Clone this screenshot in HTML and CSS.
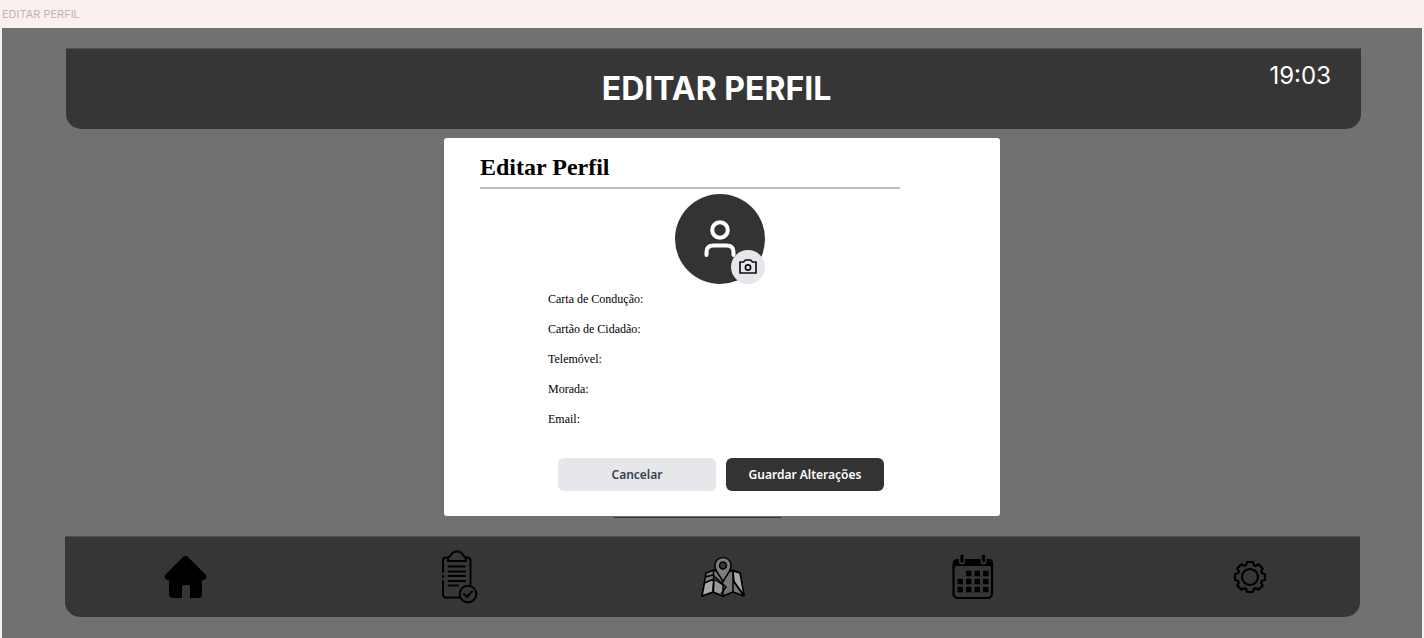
FILE: index.html
```html
<!DOCTYPE html>
<html lang="pt">
<head>
<meta charset="utf-8">
<meta name="viewport" content="width=device-width, initial-scale=1">
<title>Editar Perfil</title>
<link rel="stylesheet" href="styles.css">
</head>
<body>
<p class="frame-label">EDITAR PERFIL</p>
<div class="frame">
  <header class="topbar">
    <span></span>
    <h1 class="topbar-title">EDITAR PERFIL</h1>
    <time class="clock">19:03</time>
  </header>

  <main class="content">
    <form class="dialog" role="dialog" aria-labelledby="dialog-title">
      <h2 class="dialog-title" id="dialog-title">Editar Perfil</h2>
      <div class="avatar">
        <svg class="avatar-icon" viewBox="0 0 34 40" fill="none" stroke="#fff" stroke-width="4" stroke-linecap="round" aria-hidden="true">
          <circle cx="17" cy="11" r="7.8"/>
          <path d="M3.500 36V33Q3.500 26.500 10.500 26.500H23.500Q30.500 26.500 30.500 33V36"/>
        </svg>
        <button class="camera" type="button" aria-label="Alterar fotografia">
          <svg class="camera-icon" viewBox="0 0 20 18" fill="none" stroke="#111" stroke-width="1.700" stroke-linejoin="round" aria-hidden="true">
            <path d="M2 4H5.500L7.500 2H12.500L14.500 4H18V15H2Z"/>
            <circle cx="10" cy="9.500" r="2.600"/>
          </svg>
        </button>
      </div>
      <div class="fields">
        <label for="carta">Carta de Condução:</label><input id="carta" type="text">
        <label for="cartao">Cartão de Cidadão:</label><input id="cartao" type="text">
        <label for="telemovel">Telemóvel:</label><input id="telemovel" type="tel">
        <label for="morada">Morada:</label><input id="morada" type="text">
        <label for="email">Email:</label><input id="email" type="email">
      </div>
      <div class="actions">
        <button class="btn btn-cancel" type="button">Cancelar</button>
        <button class="btn btn-save" type="submit">Guardar Alterações</button>
      </div>
    </form>
    <div class="underlay-edge"></div>
  </main>

  <nav class="bottombar" aria-label="Principal">
    <a href="#inicio" aria-label="Início">
      <svg width="43" height="44" viewBox="0 0 43 44" aria-hidden="true">
        <path d="M18.800 2.200Q21.500 0 24.200 2.200L41.500 19.500Q43.500 22 41.500 24Q40.500 25.200 38 25V39Q38 43 34 43H26V32Q26 30 24 30H20Q18 30 18 32V43H9Q5 43 5 39V25Q2.500 25.200 1.500 24Q-.5 22 1.500 19.500Z"/>
      </svg>
    </a>
    <a href="#tarefas" aria-label="Tarefas">
      <svg width="38" height="54" viewBox="0 0 38 54" fill="none" stroke="#000" stroke-width="2" stroke-linecap="round" stroke-linejoin="round" aria-hidden="true">
        <path d="M7 7.500H5Q2 7.500 2 10.500V22M2 31V44Q2 47.500 5 47.500H19M2 26V27M24 7.500H26Q29.500 7.500 29.500 10.500V34"/>
        <path d="M7 11V8Q7 6.500 9 6.500Q11 1.500 16 1.500T23 6.500Q25 6.500 25 8V11Z"/>
        <path d="M7.500 16.500H24M7.500 21.500H24M7.500 26H24M7.500 31H24M7.500 35.500H17"/>
        <circle cx="27" cy="44" r="8.300"/>
        <path d="M23 44L26 47L31 41.500"/>
      </svg>
    </a>
    <a href="#mapa" aria-label="Mapa">
      <svg width="46" height="42" viewBox="-1 0 46 42" stroke="#000" stroke-width="1.500" stroke-linejoin="round" aria-hidden="true">
        <path fill="#777" d="M5 17L13 14L22 19L32 14L39 17L43 40L32 36L22 40L12 36L1 40Z"/>
        <path fill="#a9a9a9" d="M3.500 27L13 23L12 36L1 40ZM32 15L39 17L43 39L33 26Z"/>
        <path fill="#999" d="M13 23L22 29V40L12 36Z"/>
        <path fill="none" stroke-width="1.500" d="M12.500 15V36M32 14V36M4 21L12 19L25 31L20 38M32 24L42 39"/>
        <path fill="#7e7e7e" d="M22 26C20 20 14 16 14 9.500A8 8 0 0 1 30 9.500C30 16 24 20 22 26Z"/>
        <circle cx="22" cy="9.500" r="3.500" fill="#363636" stroke-width="1.500"/>
      </svg>
    </a>
    <a href="#calendario" aria-label="Calendário">
      <svg width="42" height="46" viewBox="0 0 42 46" aria-hidden="true">
        <rect x="1.500" y="6.500" width="38.500" height="37.500" rx="4.500" fill="none" stroke="#000" stroke-width="2.200"/>
        <path d="M1 15V9Q1 5 5 5H37Q41 5 41 9V15L38 12H4Z"/>
        <path d="M10 3V7.500M31.500 3V7.500" stroke="#363636" stroke-width="6" stroke-linecap="round"/>
        <path d="M10 2V7M31.500 2V7" stroke="#000" stroke-width="3.200" stroke-linecap="round"/>
        <path stroke="#000" stroke-width="5.500" stroke-dasharray="5.500 3" d="M14 19.500H37M5.500 27.500H37M5.500 35.500H37"/>
      </svg>
    </a>
    <a href="#definicoes" aria-label="Definições">
      <svg width="34" height="34" viewBox="-17 -17 34 34" fill="none" stroke="#000" stroke-width="2.200" stroke-linejoin="round" aria-hidden="true">
        <path d="M-3.800-11.900L-3-15H3L3.800-11.900L5.700-11.100L8.500-12.700L12.700-8.500L11.100-5.700L11.900-3.800L15-3V3L11.900 3.800L11.100 5.700L12.700 8.500L8.500 12.700L5.700 11.100L3.800 11.900L3 15H-3L-3.800 11.900L-5.700 11.100L-8.500 12.700L-12.700 8.500L-11.100 5.700L-11.900 3.800L-15 3V-3L-11.900-3.800L-11.100-5.700L-12.700-8.500L-8.500-12.700L-5.700-11.100Z"/>
        <circle r="8"/>
      </svg>
    </a>
  </nav>
</div>
</body>
</html>
```
FILE: styles.css
```css
* {
  box-sizing: border-box;
}

body {
  margin: 0;
  min-height: 100vh;
  display: flex;
  flex-direction: column;
  background: #faf0ee;
  font-family: Inter, "Liberation Sans", sans-serif;
}

.frame-label {
  margin: 0;
  padding: 0 2px;
  font-size: 11px;
  line-height: 28px;
  color: #bfb5b4;
}

.frame {
  flex: 1;
  display: flex;
  flex-direction: column;
  margin: 0 2px;
  padding: 20px 61px 21px 63px;
  background: #717171;
}

.topbar {
  display: grid;
  grid-template-columns: 1fr auto 1fr;
  margin-left: 1px;
  min-height: 81px;
  padding: 0 30px 0 36px;
  align-items: center;
  background: #363636;
  border-top: 1px solid #505050;
  border-radius: 0 0 15px 15px;
  color: #fff;
}

.topbar-title {
  margin: 0;
  font-size: 32px;
  line-height: 40px;
  font-weight: 700;
}

.clock {
  align-self: start;
  justify-self: end;
  padding-top: 12px;
  font-size: 24px;
  line-height: 30px;
}

.content {
  flex: 1;
  display: flex;
  flex-direction: column;
  align-items: center;
  padding: 9px 0 18px 18px;
}

.dialog {
  width: 100%;
  max-width: 556px;
  padding: 12px 36px 25px;
  background: #fff;
  border-radius: 3px;
  font-family: "Liberation Serif", serif;
  color: #000;
}

.dialog-title {
  margin: 0 64px 5px 0;
  padding-bottom: 3px;
  border-bottom: 2px solid #bdbdbd;
  font-size: 24px;
  line-height: 34px;
  font-weight: 700;
}

.avatar {
  position: relative;
  display: grid;
  place-items: center;
  width: 90px;
  height: 90px;
  margin: 0 0 0 195px;
  background: #333;
  border-radius: 50%;
}

.avatar-icon {
  width: 34px;
  height: 40px;
}

.camera {
  position: absolute;
  right: 0;
  bottom: 0;
  display: grid;
  place-items: center;
  width: 34px;
  height: 34px;
  padding: 0;
  border: 0;
  border-radius: 50%;
  background: #e5e7eb;
}

.camera-icon {
  width: 20px;
  height: 18px;
}

.fields {
  display: grid;
  grid-template-columns: auto 1fr;
  grid-auto-rows: 30px;
  align-items: center;
  column-gap: 8px;
  padding: 0 68px;
  font-size: 12px;
}

.fields input {
  min-width: 0;
  border: 0;
  background: transparent;
  font: inherit;
}

.actions {
  display: flex;
  gap: 10px;
  padding: 24px 80px 0 78px;
}

.btn {
  flex: 1;
  height: 33px;
  padding: 0;
  border: 0;
  border-radius: 6px;
  font-family: "Noto Sans", "Open Sans", sans-serif;
  font-size: 12px;
  font-weight: 600;
  white-space: nowrap;
}

.btn-cancel {
  background: #e5e7eb;
  color: #374151;
}

.btn-save {
  background: #333;
  color: #fff;
}

.underlay-edge {
  width: 167px;
  height: 2px;
  margin-right: 49px;
  border-bottom: 1px solid #363636;
}

.bottombar {
  display: grid;
  grid-template-columns: 277fr 259fr 252fr 281fr auto;
  align-items: center;
  min-height: 81px;
  margin-right: 1px;
  padding: 0 93px 0 99px;
  background: #363636;
  border-top: 1px solid #505050;
  border-radius: 0 0 15px 15px;
}

.bottombar a {
  display: flex;
}
```
